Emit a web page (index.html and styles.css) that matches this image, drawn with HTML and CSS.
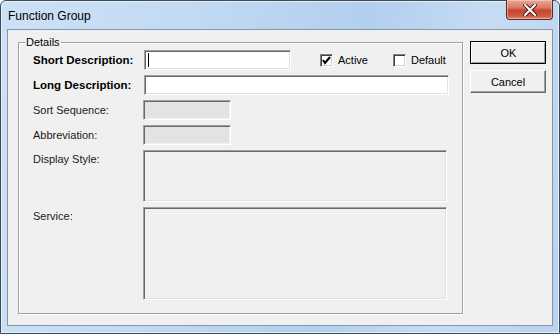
FILE: index.html
```html
<!DOCTYPE html>
<html lang="en">
<head>
  <meta charset="UTF-8" />
  <title>Function Group</title>
  <link rel="stylesheet" href="styles.css">
</head>
<body>

<div class="window">
  <!-- Title bar -->
  <div class="titlebar">
    <span class="title">Function Group</span>
    <button class="close" type="button">
      <svg width="14" height="12" viewBox="0 0 14 12">
        <path d="M2 1 L12 11 M12 1 L2 11" stroke="#4a1a14" stroke-width="4" stroke-linecap="square"/>
        <path d="M2 1 L12 11 M12 1 L2 11" stroke="#ffffff" stroke-width="2" stroke-linecap="square"/>
      </svg>
    </button>
  </div>

  <!-- Client area -->
  <div class="client">
    <fieldset class="details">
      <legend>Details</legend>
      <div class="form-grid">
        <label class="lbl bold">Short Description:</label>
        <div class="inline-row">
          <div class="field short"><span class="caret"></span></div>
          <label class="check first"><span class="box"><svg width="9" height="9" viewBox="0 0 9 9"><path d="M1 4 L3 7 L8 1" fill="none" stroke="#000" stroke-width="2"/></svg></span>Active</label>
          <label class="check"><span class="box"></span>Default</label>
        </div>

        <label class="lbl bold">Long Description:</label>
        <input type="text" class="field long" />

        <label class="lbl">Sort Sequence:</label>
        <div class="field small disabled"></div>

        <label class="lbl">Abbreviation:</label>
        <div class="field small disabled"></div>

        <label class="lbl top">Display Style:</label>
        <div class="field area display"></div>

        <label class="lbl top">Service:</label>
        <div class="field area service"></div>
      </div>
    </fieldset>

    <div class="buttons">
      <button type="button" class="btn">OK</button>
      <button type="button" class="btn">Cancel</button>
    </div>
  </div>
</div>

</body>
</html>
```

FILE: styles.css
```css
body {
  margin: 0;
  padding: 0;
  background: #ffffff;
  font-family: "Liberation Sans", Arial, sans-serif;
  font-size: 11px;
  color: #000;
}

.window {
  width: 560px;
  height: 334px;
  box-sizing: border-box;
  border: 1px solid #3c4a5a;
  border-radius: 6px 6px 0 0;
  background: linear-gradient(100deg, #cde1f6 0%, #c0d9f2 35%, #b2cfee 60%, #c6dcf3 80%, #b9d3ee 100%);
  box-shadow: inset 0 0 0 1px #e6f0fb;
  display: flex;
  flex-direction: column;
}

.titlebar {
  height: 28px;
  display: flex;
  align-items: flex-start;
  justify-content: space-between;
  padding-left: 7px;
}

.title {
  font-size: 12px;
  margin-top: 8px;
  color: #000;
}

.close {
  width: 47px;
  height: 20px;
  margin: -1px 6px 0 0;
  padding: 0;
  border: 1px solid #5c2a22;
  border-top: none;
  border-radius: 0 0 4px 4px;
  background: linear-gradient(#e9a99a 0%, #d87a66 40%, #c3452f 55%, #cf5a44 85%, #e08c78 100%);
  box-shadow: inset 0 0 0 1px rgba(255, 220, 210, 0.5);
  display: flex;
  align-items: center;
  justify-content: center;
}

.client {
  flex: 1;
  margin: 0 6px 7px 6px;
  border: 1px solid #8396ab;
  background: #f0f0f0;
  display: flex;
  align-items: flex-start;
  padding: 6px 6px 0 10px;
}

.details {
  width: 445px;
  height: 278px;
  box-sizing: border-box;
  margin: 0;
  padding: 2px 13px 0 14px;
  border: 1px solid #a0a0a0;
  box-shadow: inset 1px 1px 0 #fff, 1px 1px 0 #fff;
}

.details legend {
  padding: 0 1px;
  margin-left: -8px;
  font-size: 11px;
}

.form-grid {
  display: grid;
  grid-template-columns: 110px 1fr;
  grid-template-rows: 20px 20px 20px 20px 52px 93px;
  row-gap: 5px;
}

.lbl {
  display: flex;
  align-items: center;
  color: #1a1a1a;
}

.lbl.top {
  align-items: flex-start;
  padding-top: 3px;
}

.bold {
  font-weight: bold;
  font-size: 11.5px;
  color: #000;
}

.field {
  box-sizing: border-box;
  height: 20px;
  margin: 0;
  padding: 0 3px;
  font-family: inherit;
  font-size: 11px;
  background: #fff;
  border-top: 1px solid #a0a0a0;
  border-left: 1px solid #a0a0a0;
  border-right: 1px solid #fff;
  border-bottom: 1px solid #fff;
  box-shadow: inset 1px 1px 0 #696969, inset -1px -1px 0 #e3e3e3;
  outline: none;
}

.inline-row {
  display: flex;
  align-items: center;
}

.short {
  width: 147px;
  margin-left: 1px;
  display: flex;
  align-items: center;
}

.caret {
  width: 1px;
  height: 14px;
  background: #000;
}

.long {
  width: 305px;
  margin-left: 1px;
}

.small {
  width: 88px;
}

.disabled {
  background: #e3e3e3;
  box-shadow: inset 1px 1px 0 #696969, inset -1px -1px 0 #f0f0f0;
}

.area {
  height: auto;
  width: 304px;
  background: #f0f0f0;
}

.check {
  display: flex;
  align-items: center;
  margin-left: 25px;
}

.check.first {
  margin-left: 29px;
}

.box {
  width: 13px;
  height: 13px;
  box-sizing: border-box;
  background: #fff;
  border-top: 1px solid #808080;
  border-left: 1px solid #808080;
  border-right: 1px solid #fff;
  border-bottom: 1px solid #fff;
  box-shadow: inset 1px 1px 0 #404040, inset -1px -1px 0 #d4d0c8;
  margin-right: 5px;
  display: flex;
  align-items: center;
  justify-content: center;
}

.buttons {
  display: flex;
  flex-direction: column;
  gap: 6px;
  margin: 5px 0 0 7px;
}

.btn {
  width: 76px;
  height: 23px;
  padding: 0;
  font-family: inherit;
  font-size: 11px;
  color: #000;
  background: #f0f0f0;
  border-top: 1px solid #fff;
  border-left: 1px solid #fff;
  border-right: 1px solid #696969;
  border-bottom: 1px solid #696969;
  box-shadow: inset -1px -1px 0 #a0a0a0;
}

.btn:first-child {
  outline: 1px solid #000;
  outline-offset: -1px;
  border-top: 2px solid #fff;
  border-left: 2px solid #fff;
}
```
